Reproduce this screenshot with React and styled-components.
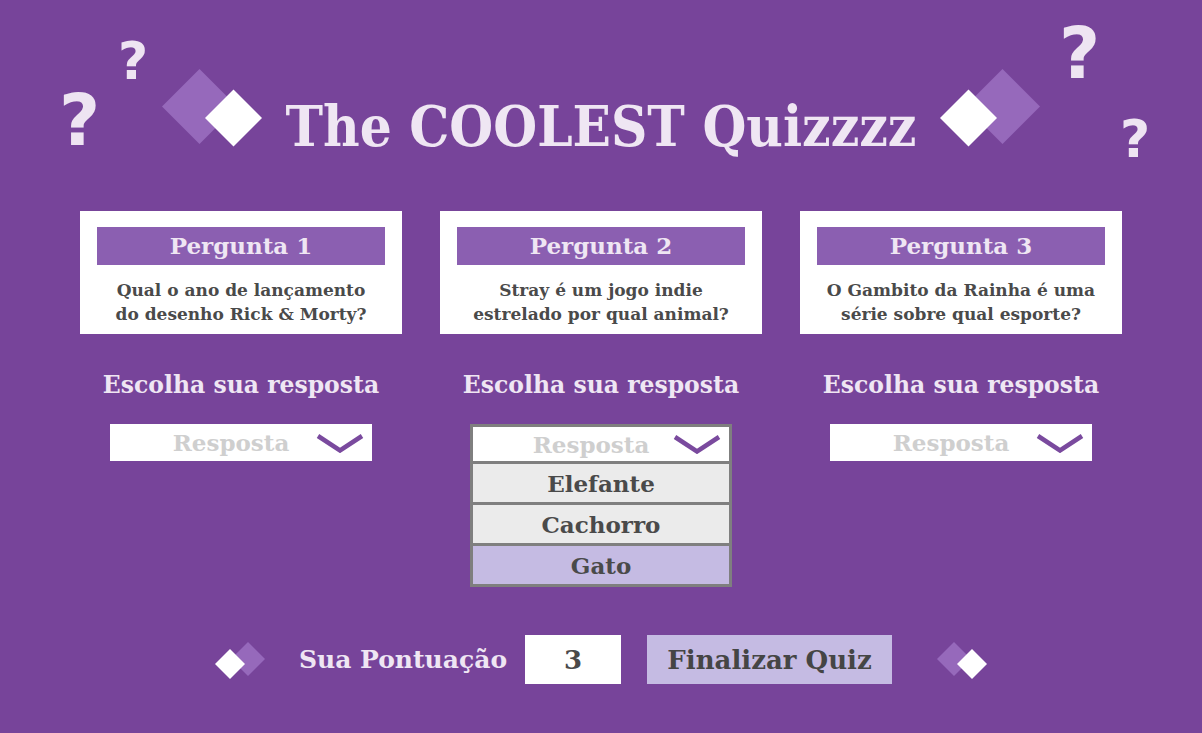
import React from 'react';
import styled, { createGlobalStyle } from 'styled-components';

const GlobalStyle = createGlobalStyle`
  html, body {
    margin: 0;
    padding: 0;
    background: #77449a;
  }
  body {
    font-family: 'DejaVu Serif', 'Liberation Serif', serif;
  }
`;

const Page = styled.div`
  position: relative;
  min-height: 733px;
  padding-top: 69px;
  box-sizing: border-box;
  overflow: hidden;
`;

const QuestionMark = styled.span`
  position: absolute;
  top: ${p => p.$top}px;
  left: ${p => p.$left}px;
  font-family: 'DejaVu Sans', sans-serif;
  font-weight: bold;
  font-size: ${p => p.$size}px;
  line-height: 1;
  color: #eee4f2;
`;

const Header = styled.header`
  display: flex;
  justify-content: center;
  align-items: flex-start;
  gap: 24px;
`;

const Title = styled.h1`
  margin: 29px 0 0;
  font-family: 'DejaVu Serif Condensed', 'DejaVu Serif', serif;
  font-stretch: condensed;
  font-size: 56px;
  line-height: 1;
  font-weight: bold;
  color: #efe6f3;
  white-space: nowrap;
`;

const DiamondSvg = styled.svg`
  display: block;
  flex-shrink: 0;
  transform: ${p => (p.$flip ? 'scaleX(-1)' : 'none')};
`;

const Diamonds = ({ small, flip }) =>
  small ? (
    <DiamondSvg $flip={flip} width="50" height="40" viewBox="0 0 50 40">
      <polygon points="33,2 50,19 33,36 16,19" fill="#9669bb" />
      <polygon points="15,9 30,24 15,39 0,24" fill="#ffffff" />
    </DiamondSvg>
  ) : (
    <DiamondSvg $flip={flip} width="100" height="78" viewBox="0 0 100 78">
      <polygon points="37.5,0 75,37.5 37.5,75 0,37.5" fill="#9669bb" />
      <polygon points="71.5,20.5 100,49 71.5,77.5 43,49" fill="#ffffff" />
    </DiamondSvg>
  );

const Columns = styled.main`
  display: grid;
  grid-template-columns: repeat(3, 322px);
  column-gap: 38px;
  justify-content: center;
  margin-top: 57px;
`;

const Column = styled.section`
  display: flex;
  flex-direction: column;
  align-items: center;
`;

const Card = styled.div`
  width: 322px;
  height: 123px;
  box-sizing: border-box;
  background: #ffffff;
  padding: 16px 17px 0;
`;

const CardTitle = styled.h2`
  margin: 0;
  height: 38px;
  line-height: 38px;
  background: #8b5fb1;
  color: #efe6f3;
  font-size: 23px;
  font-weight: bold;
  text-align: center;
`;

const QuestionText = styled.p`
  margin: 13px 0 0;
  font-size: 17px;
  line-height: 24px;
  font-weight: bold;
  color: #4a4a4a;
  text-align: center;
`;

const Prompt = styled.h3`
  margin: 36px 0 0;
  font-size: 23.5px;
  line-height: 30px;
  font-weight: bold;
  color: #efe6f3;
`;

const Select = styled.div`
  position: relative;
  margin-top: 24px;
  width: 262px;
`;

const SelectBox = styled.div`
  display: flex;
  align-items: center;
  height: 37px;
  box-sizing: border-box;
  background: #ffffff;
  border: ${p => (p.$open ? '3px solid #7f7f7f' : 'none')};
  border-bottom: none;
`;

const Placeholder = styled.span`
  flex: 1;
  text-align: center;
  font-size: 23px;
  font-weight: bold;
  line-height: 1;
  color: #cfcfcf;
`;

const ChevronSvg = styled.svg`
  display: block;
  flex-shrink: 0;
  margin-left: -36px;
  margin-right: 8px;
`;

const Chevron = () => (
  <ChevronSvg width="48" height="20" viewBox="0 0 48 20">
    <polyline
      points="2,3 24,17.5 46,3"
      fill="none"
      stroke="#7a4a9e"
      strokeWidth="4.5"
    />
  </ChevronSvg>
);

const Menu = styled.ul`
  position: absolute;
  top: 100%;
  left: 0;
  right: 0;
  z-index: 1;
  margin: 0;
  padding: 0;
  list-style: none;
  background: #7f7f7f;
  border: 3px solid #7f7f7f;
  border-top: none;
`;

const Option = styled.li`
  margin-top: 3px;
  height: 38px;
  line-height: 40px;
  text-align: center;
  background: ${p => (p.$selected ? '#c5bbe3' : '#ebebeb')};
  font-size: 23px;
  font-weight: bold;
  color: #4a4a4a;
`;

const Footer = styled.footer`
  display: flex;
  justify-content: center;
  align-items: center;
  margin-top: 174px;
`;

const ScoreLabel = styled.span`
  margin: 0 18px 0 34px;
  font-size: 25px;
  font-weight: bold;
  color: #efe6f3;
`;

const ScoreBox = styled.div`
  display: flex;
  align-items: center;
  justify-content: center;
  width: 96px;
  height: 49px;
  background: #ffffff;
  font-size: 26px;
  font-weight: bold;
  color: #4a4a4a;
`;

const FinishButton = styled.button`
  width: 245px;
  height: 49px;
  margin: 0 45px 0 26px;
  padding: 0;
  border: none;
  background: #c5bbe3;
  font-family: inherit;
  font-size: 26px;
  font-weight: bold;
  color: #454545;
  cursor: pointer;
`;

const questions = [
  {
    id: 1,
    lines: ['Qual o ano de lançamento', 'do desenho Rick & Morty?'],
  },
  {
    id: 2,
    lines: ['Stray é um jogo indie', 'estrelado por qual animal?'],
    open: true,
    options: ['Elefante', 'Cachorro', 'Gato'],
    selected: 'Gato',
  },
  {
    id: 3,
    lines: ['O Gambito da Rainha é uma', 'série sobre qual esporte?'],
  },
];

export default function App() {
  return (
    <>
      <GlobalStyle />
      <Page>
        <QuestionMark $top={85} $left={59} $size={71}>?</QuestionMark>
        <QuestionMark $top={35} $left={118} $size={52}>?</QuestionMark>
        <QuestionMark $top={18} $left={1059} $size={71}>?</QuestionMark>
        <QuestionMark $top={113} $left={1120} $size={52}>?</QuestionMark>

        <Header>
          <Diamonds />
          <Title>The COOLEST Quizzzz</Title>
          <Diamonds flip />
        </Header>

        <Columns>
          {questions.map(q => (
            <Column key={q.id}>
              <Card>
                <CardTitle>Pergunta {q.id}</CardTitle>
                <QuestionText>
                  {q.lines[0]}
                  <br />
                  {q.lines[1]}
                </QuestionText>
              </Card>
              <Prompt>Escolha sua resposta</Prompt>
              <Select>
                <SelectBox $open={q.open}>
                  <Placeholder>Resposta</Placeholder>
                  <Chevron />
                </SelectBox>
                {q.open && (
                  <Menu>
                    {q.options.map(opt => (
                      <Option key={opt} $selected={opt === q.selected}>
                        {opt}
                      </Option>
                    ))}
                  </Menu>
                )}
              </Select>
            </Column>
          ))}
        </Columns>

        <Footer>
          <Diamonds small />
          <ScoreLabel>Sua Pontuação</ScoreLabel>
          <ScoreBox>3</ScoreBox>
          <FinishButton>Finalizar Quiz</FinishButton>
          <Diamonds small flip />
        </Footer>
      </Page>
    </>
  );
}
